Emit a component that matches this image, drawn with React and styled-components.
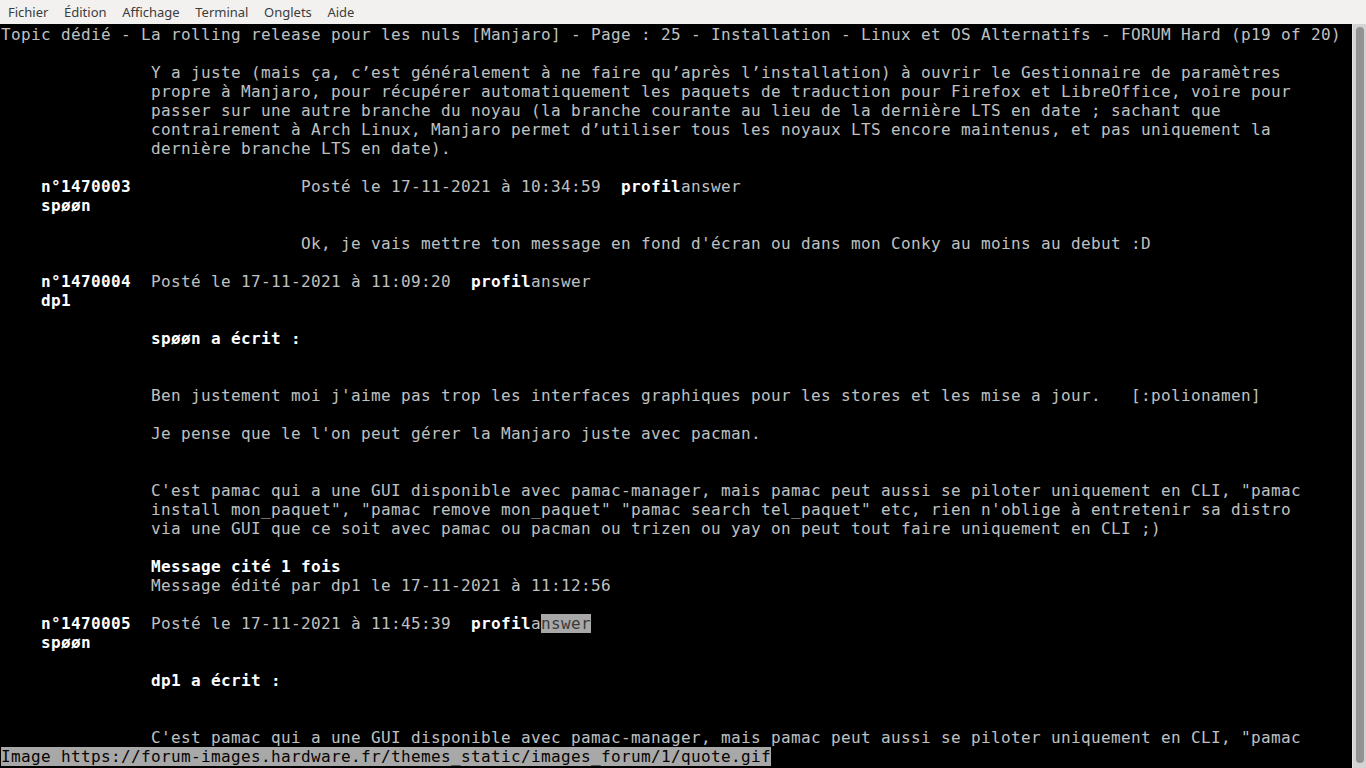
import React from "react";
import styled, { createGlobalStyle } from "styled-components";

const Global = createGlobalStyle`
  html, body { margin: 0; padding: 0; background: #000; overflow: hidden; }
  #root { height: 768px; }
`;

const Window = styled.div`
  width: 1366px;
  height: 768px;
  display: flex;
  flex-direction: column;
  overflow: hidden;
  background: #000;
`;

const MenuBar = styled.div`
  height: 24px;
  flex: 0 0 24px;
  background: #f2f1f0;
  display: flex;
  align-items: center;
  padding-left: 0.2px;
  font-family: "Noto Sans", "DejaVu Sans", sans-serif;
  font-size: 13px;
  color: #3c3c3c;
`;

const MenuItem = styled.span`
  padding: 0 7.8px;
  line-height: 24px;
`;

const Terminal = styled.div`
  flex: 1;
  display: flex;
  min-height: 0;
`;

const Screen = styled.div`
  width: 1352px;
  flex: 0 0 1352px;
  padding-top: 1px;
  background: #000;
  overflow: hidden;
  font-family: "DejaVu Sans Mono", "Liberation Mono", monospace;
  font-size: 16px;
  letter-spacing: 0.367px;
  color: #c0c0c0;
`;

const Line = styled.div`
  height: 19px;
  line-height: 19px;
  white-space: pre;
  padding-left: ${(p) => 1 + (p.$indent || 0) * 10}px;
`;

const Bold = styled.span`
  font-weight: bold;
  color: #ffffff;
`;

const Selected = styled.span`
  background: #a8a8a8;
  color: ${(p) => (p.$dark ? "#050505" : "#3a3a3a")};
`;

const Scrollbar = styled.div`
  flex: 0 0 14px;
  background: #d3d3d3;
  border-left: 1px solid #e4e4e4;
  box-sizing: border-box;
  display: flex;
  justify-content: center;
  padding: 3px 0 5px 1px;
`;

const Thumb = styled.div`
  width: 8px;
  background: #929292;
  border-radius: 4px;
`;

const menus = ["Fichier", "Édition", "Affichage", "Terminal", "Onglets", "Aide"];

function Post({ num, user, gap, date, selected }) {
  return (
    <>
      <Line $indent={4}>
        <Bold>{num}</Bold>
        {gap}
        {"Posté le " + date + "  "}
        <Bold>profil</Bold>
        {selected ? (
          <>
            a<Selected>nswer</Selected>
          </>
        ) : (
          "answer"
        )}
      </Line>
      <Line $indent={4}>
        <Bold>{user}</Bold>
      </Line>
    </>
  );
}

export default function App() {
  return (
    <Window>
      <Global />
      <MenuBar>
        {menus.map((m) => (
          <MenuItem key={m}>{m}</MenuItem>
        ))}
      </MenuBar>
      <Terminal>
        <Screen>
          <Line>Topic dédié - La rolling release pour les nuls [Manjaro] - Page : 25 - Installation - Linux et OS Alternatifs - FORUM Hard (p19 of 20)</Line>
          <Line />
          <Line $indent={15}>Y a juste (mais ça, c’est généralement à ne faire qu’après l’installation) à ouvrir le Gestionnaire de paramètres</Line>
          <Line $indent={15}>propre à Manjaro, pour récupérer automatiquement les paquets de traduction pour Firefox et LibreOffice, voire pour</Line>
          <Line $indent={15}>passer sur une autre branche du noyau (la branche courante au lieu de la dernière LTS en date ; sachant que</Line>
          <Line $indent={15}>contrairement à Arch Linux, Manjaro permet d’utiliser tous les noyaux LTS encore maintenus, et pas uniquement la</Line>
          <Line $indent={15}>dernière branche LTS en date).</Line>
          <Line />
          <Post num="n°1470003" user="spøøn" gap={"                 "} date="17-11-2021 à 10:34:59" />
          <Line />
          <Line $indent={30}>Ok, je vais mettre ton message en fond d'écran ou dans mon Conky au moins au debut :D</Line>
          <Line />
          <Post num="n°1470004" user="dp1" gap={"  "} date="17-11-2021 à 11:09:20" />
          <Line />
          <Line $indent={15}>
            <Bold>spøøn a écrit :</Bold>
          </Line>
          <Line />
          <Line />
          <Line $indent={15}>Ben justement moi j'aime pas trop les interfaces graphiques pour les stores et les mise a jour.   [:polionamen]</Line>
          <Line />
          <Line $indent={15}>Je pense que le l'on peut gérer la Manjaro juste avec pacman.</Line>
          <Line />
          <Line />
          <Line $indent={15}>C'est pamac qui a une GUI disponible avec pamac-manager, mais pamac peut aussi se piloter uniquement en CLI, "pamac</Line>
          <Line $indent={15}>install mon_paquet", "pamac remove mon_paquet" "pamac search tel_paquet" etc, rien n'oblige à entretenir sa distro</Line>
          <Line $indent={15}>via une GUI que ce soit avec pamac ou pacman ou trizen ou yay on peut tout faire uniquement en CLI ;)</Line>
          <Line />
          <Line $indent={15}>
            <Bold>Message cité 1 fois</Bold>
          </Line>
          <Line $indent={15}>Message édité par dp1 le 17-11-2021 à 11:12:56</Line>
          <Line />
          <Post num="n°1470005" user="spøøn" gap={"  "} date="17-11-2021 à 11:45:39" selected />
          <Line />
          <Line $indent={15}>
            <Bold>dp1 a écrit :</Bold>
          </Line>
          <Line />
          <Line />
          <Line $indent={15}>C'est pamac qui a une GUI disponible avec pamac-manager, mais pamac peut aussi se piloter uniquement en CLI, "pamac</Line>
          <Line>
            <Selected $dark>Image https://forum-images.hardware.fr/themes_static/images_forum/1/quote.gif</Selected>
          </Line>
        </Screen>
        <Scrollbar>
          <Thumb />
        </Scrollbar>
      </Terminal>
    </Window>
  );
}
